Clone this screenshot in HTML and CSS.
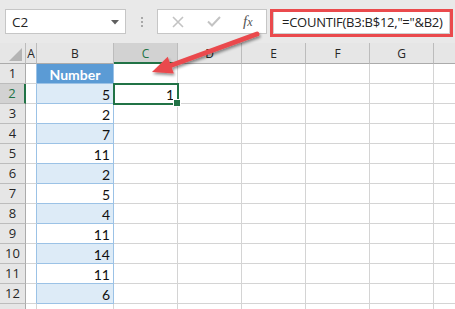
FILE: index.html
```html
<!DOCTYPE html>
<html>
<head>
<meta charset="utf-8">
<link rel="stylesheet" href="styles.css">
</head>
<body>
<div class="app">
  <div class="toolbar">
    <div class="namebox">
      <span class="ref">C2</span>
      <svg class="caret" width="8" height="5" viewBox="0 0 8 5"><polygon points="0,0 8,0 4,4.5" fill="#5f5f5f"/></svg>
    </div>
    <div class="grip"><i></i><i></i><i></i></div>
    <div class="fxbtns">
      <svg class="btn-x" width="12" height="12" viewBox="0 0 12 12"><path d="M1 1 L11 11 M11 1 L1 11" stroke="#c3c3c3" stroke-width="1.6" fill="none"/></svg>
      <svg class="btn-ok" width="14" height="11" viewBox="0 0 14 11"><path d="M1 5.5 L5 9.5 L13 1" stroke="#c3c3c3" stroke-width="2" fill="none"/></svg>
      <span class="fx">f<span class="fx-x">x</span></span>
    </div>
    <div class="formula"><div class="formula-in">=COUNTIF(B3:B$12,"="&amp;B2)</div></div>
  </div>

  <div class="sheet">
    <div class="hd corner"><svg width="13" height="13" viewBox="0 0 13 13"><polygon points="13,0 13,13 0,13" fill="#b4b4b4"/></svg></div>
    <div class="hd col">A</div>
    <div class="hd col">B</div>
    <div class="hd col sel">C</div>
    <div class="hd col">D</div>
    <div class="hd col">E</div>
    <div class="hd col">F</div>
    <div class="hd col">G</div>
    <div class="hd col last"></div>

    <div class="hd row">1</div><div class="c a"></div><div class="c b th">Number</div><div class="c"></div><div class="c"></div><div class="c"></div><div class="c"></div><div class="c"></div><div class="c last"></div>
    <div class="hd row sel">2</div><div class="c a"></div><div class="c b n alt">5</div><div class="c n active">1</div><div class="c"></div><div class="c"></div><div class="c"></div><div class="c"></div><div class="c last"></div>
    <div class="hd row">3</div><div class="c a"></div><div class="c b n">2</div><div class="c"></div><div class="c"></div><div class="c"></div><div class="c"></div><div class="c"></div><div class="c last"></div>
    <div class="hd row">4</div><div class="c a"></div><div class="c b n alt">7</div><div class="c"></div><div class="c"></div><div class="c"></div><div class="c"></div><div class="c"></div><div class="c last"></div>
    <div class="hd row">5</div><div class="c a"></div><div class="c b n">11</div><div class="c"></div><div class="c"></div><div class="c"></div><div class="c"></div><div class="c"></div><div class="c last"></div>
    <div class="hd row">6</div><div class="c a"></div><div class="c b n alt">2</div><div class="c"></div><div class="c"></div><div class="c"></div><div class="c"></div><div class="c"></div><div class="c last"></div>
    <div class="hd row">7</div><div class="c a"></div><div class="c b n">5</div><div class="c"></div><div class="c"></div><div class="c"></div><div class="c"></div><div class="c"></div><div class="c last"></div>
    <div class="hd row">8</div><div class="c a"></div><div class="c b n alt">4</div><div class="c"></div><div class="c"></div><div class="c"></div><div class="c"></div><div class="c"></div><div class="c last"></div>
    <div class="hd row">9</div><div class="c a"></div><div class="c b n">11</div><div class="c"></div><div class="c"></div><div class="c"></div><div class="c"></div><div class="c"></div><div class="c last"></div>
    <div class="hd row">10</div><div class="c a"></div><div class="c b n alt">14</div><div class="c"></div><div class="c"></div><div class="c"></div><div class="c"></div><div class="c"></div><div class="c last"></div>
    <div class="hd row">11</div><div class="c a"></div><div class="c b n">11</div><div class="c"></div><div class="c"></div><div class="c"></div><div class="c"></div><div class="c"></div><div class="c last"></div>
    <div class="hd row">12</div><div class="c a"></div><div class="c b n alt">6</div><div class="c"></div><div class="c"></div><div class="c"></div><div class="c"></div><div class="c"></div><div class="c last"></div>
    <div class="hd row"></div><div class="c"></div><div class="c"></div><div class="c"></div><div class="c"></div><div class="c"></div><div class="c"></div><div class="c"></div><div class="c last"></div>
  </div>

  <svg class="arrow" width="455" height="309" viewBox="0 0 455 309">
    <defs>
      <filter id="sh" x="-20%" y="-40%" width="140%" height="180%">
        <feGaussianBlur in="SourceAlpha" stdDeviation="1.5"/>
        <feOffset dx="1" dy="2" result="b"/>
        <feComponentTransfer><feFuncA type="linear" slope="0.45"/></feComponentTransfer>
        <feMerge><feMergeNode/><feMergeNode in="SourceGraphic"/></feMerge>
      </filter>
    </defs>
    <g filter="url(#sh)">
      <line x1="257" y1="34" x2="168" y2="66.5" stroke="#ea4a4d" stroke-width="5" stroke-linecap="round"/>
      <polygon points="152,72 167.7,56.7 173.9,73.6" fill="#ea4a4d"/>
    </g>
  </svg>
</div>
</body>
</html>
```

FILE: styles.css
```css
* { box-sizing: border-box; }
html, body { margin: 0; padding: 0; }
body { width: 455px; height: 309px; overflow: hidden; background: #fff; }
.app { position: relative; width: 455px; height: 309px; overflow: hidden; }

.toolbar {
  height: 43px;
  background: #e9e9e9;
  display: flex;
  align-items: flex-start;
  padding: 9px 0 0 5px;
}
.namebox {
  width: 121px; height: 25px;
  background: #fff;
  border: 1px solid #c6c6c6;
  display: flex; align-items: center; justify-content: space-between;
  padding: 0 6px 0 6px;
  font-family: "Open Sans", sans-serif; font-size: 13.5px; color: #222;
}
.caret { margin-top: 1px; }
.grip {
  width: 31px; height: 25px;
  display: flex; flex-direction: column; align-items: center; justify-content: center; gap: 2px;
}
.grip i { display: block; width: 2px; height: 2px; background: #a8a8a8; }
.fxbtns {
  width: 110px; height: 25px;
  background: #fff;
  border: 1px solid #c6c6c6;
  display: flex; align-items: center;
  padding-left: 14px;
}
.btn-x { margin-right: 23px; }
.btn-ok { margin-right: 22px; }
.fx {
  font-family: "Liberation Serif", serif; font-style: italic;
  font-size: 15px; color: #555;
}
.fx-x { font-size: 12px; }
.formula {
  margin-left: 3px;
  width: 183px; height: 28px;
  border: 3px solid #ea4a4d;
  background: #fff;
}
.formula-in {
  height: 100%;
  border: 1px solid #d0d0d0;
  border-top: none;
  padding-left: 8px;
  font-family: "Open Sans", sans-serif; font-size: 13px; letter-spacing: -0.25px; color: #222;
  line-height: 21px;
  white-space: nowrap;
}

.sheet {
  display: grid;
  grid-template-columns: 26px 11px 77px 64px 64px 64px 64px 64px 21px;
  grid-template-rows: 21px;
  grid-auto-rows: 20px;
}
.hd {
  background: #e6e6e6;
  font-family: "Open Sans", sans-serif; font-size: 12px; color: #262626;
  border-right: 1px solid #bcbcbc;
  border-bottom: 1px solid #bcbcbc;
  display: flex; justify-content: center;
}
.hd.col { border-bottom-color: #ababab; align-items: center; padding-top: 1px; }
.hd.corner { border-bottom-color: #ababab; align-items: flex-end; justify-content: flex-end; padding: 0 3px 2px 0; }
.hd.row { border-right-color: #ababab; align-items: flex-end; line-height: 19px; padding-top: 1px; font-size: 13px; }
.hd.last { border-right: none; }
.hd.sel { background: #d2d2d2; color: #217346; }
.hd.col.sel { border-bottom: 2px solid #217346; }
.hd.row.sel { border-right: 2px solid #217346; }

.c {
  border-right: 1px solid #d4d4d4;
  border-bottom: 1px solid #d4d4d4;
  font-family: "Lato", sans-serif; font-size: 14px; color: #111;
  line-height: 19px; padding-top: 1px;
}
.c.last { border-right: none; }
.c.a { border-right-color: #9bc2e6; }
.c.b { border-right-color: #9bc2e6; border-bottom-color: #9bc2e6; }
.c.alt { background: #ddebf7; }
.c.n { text-align: right; padding-right: 3px; }
.c.th {
  background: #5b9bd5; color: #fff; font-weight: bold; text-align: center;
  border-bottom-color: #9bc2e6;
}
.c.active {
  position: relative;
  outline: 2px solid #217346;
  outline-offset: -1px;
  z-index: 2;
}
.c.active::after {
  content: "";
  position: absolute;
  right: -4px; bottom: -4px;
  width: 6px; height: 6px;
  background: #217346;
  border: 1px solid #fff;
}
.arrow { position: absolute; left: 0; top: 0; pointer-events: none; z-index: 5; }
```
